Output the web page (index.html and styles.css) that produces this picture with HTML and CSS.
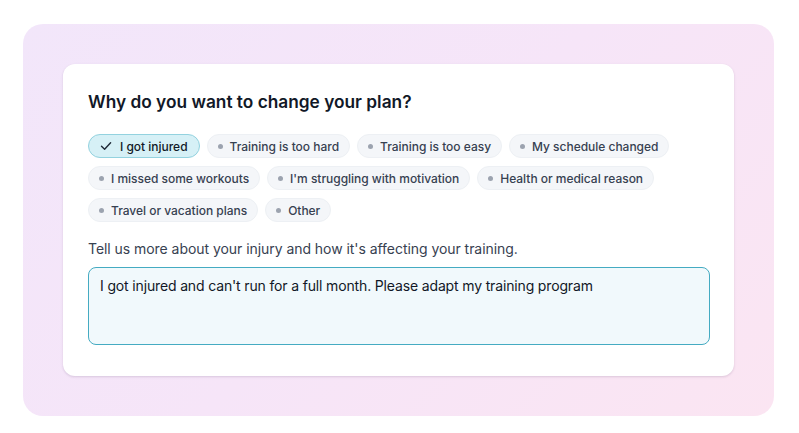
FILE: index.html
```html
<!DOCTYPE html>
<html lang="en">
<head>
<meta charset="utf-8">
<title>Change plan</title>
<link rel="stylesheet" href="styles.css">
</head>
<body>
<div class="backdrop">
  <section class="card">
    <h2 class="title">Why do you want to change your plan?</h2>
    <div class="chips">
      <span class="chip chip-selected"><svg class="check" width="12" height="12" viewBox="0 0 12 12"><polyline points="1.5,6.3 4.6,9.2 10.6,2.8" fill="none" stroke="#1f2937" stroke-width="1.4" stroke-linecap="round" stroke-linejoin="round"/></svg>I got injured</span>
      <span class="chip"><span class="dot"></span>Training is too hard</span>
      <span class="chip"><span class="dot"></span>Training is too easy</span>
      <span class="chip"><span class="dot"></span>My schedule changed</span>
      <span class="chip"><span class="dot"></span>I missed some workouts</span>
      <span class="chip"><span class="dot"></span>I'm struggling with motivation</span>
      <span class="chip"><span class="dot"></span>Health or medical reason</span>
      <span class="chip"><span class="dot"></span>Travel or vacation plans</span>
      <span class="chip"><span class="dot"></span>Other</span>
    </div>
    <label class="label" for="details">Tell us more about your injury and how it's affecting your training.</label>
    <textarea id="details" class="details">I got injured and can't run for a full month. Please adapt my training program</textarea>
  </section>
</div>
</body>
</html>
```

FILE: styles.css
```css
* { box-sizing: border-box; }
html, body { margin: 0; background: #ffffff; }
body {
  font-family: Inter, "Noto Sans", sans-serif;
  color: #111827;
  padding: 24px 0 0 23px;
}
.backdrop {
  width: 751px;
  height: 392px;
  border-radius: 20px;
  background: linear-gradient(135deg, #f2e6fa 0%, #f6e5f8 50%, #fbe5f2 100%);
  padding: 40px;
}
.card {
  width: 671px;
  height: 312px;
  background: #ffffff;
  border-radius: 12px;
  box-shadow: 0 1px 3px rgba(60, 30, 80, 0.10), 0 1px 2px rgba(60, 30, 80, 0.06);
  padding: 24px 24px 30px 25px;
  display: flex;
  flex-direction: column;
}
.title {
  margin: 0;
  font-size: 17.3px;
  line-height: 28px;
  font-weight: 600;
  color: #111827;
}
.chips {
  display: flex;
  flex-wrap: wrap;
  gap: 8px 7px;
  margin-top: 18px;
}
.chip {
  display: inline-flex;
  align-items: center;
  gap: 7px;
  height: 24px;
  padding: 0 10px 0 10px;
  border-radius: 12px;
  background: #f4f6f9;
  border: 1px solid #edf0f4;
  font-size: 12px;
  font-weight: 500;
  color: #374151;
  white-space: nowrap;
  letter-spacing: -0.02px;
}
.chip-selected {
  background: #d6f0f6;
  border-color: #93d2df;
  color: #111827;
  gap: 8px;
  padding: 0 11px;
}
.check { display: block; }
.dot {
  width: 5px;
  height: 5px;
  border-radius: 50%;
  background: #9ca3af;
}
.label {
  display: block;
  margin-top: 17px;
  font-size: 14px;
  line-height: 20px;
  color: #374151;
  letter-spacing: -0.05px;
}
.details {
  display: block;
  margin-top: 8px;
  width: 622px;
  height: 78px;
  resize: none;
  border: 1px solid #45abc2;
  border-radius: 8px;
  background: #f1f9fc;
  padding: 8px 11px;
  font-family: Inter, "Noto Sans", sans-serif;
  font-size: 14px;
  line-height: 20px;
  letter-spacing: -0.15px;
  color: #111827;
  outline: none;
}
```
